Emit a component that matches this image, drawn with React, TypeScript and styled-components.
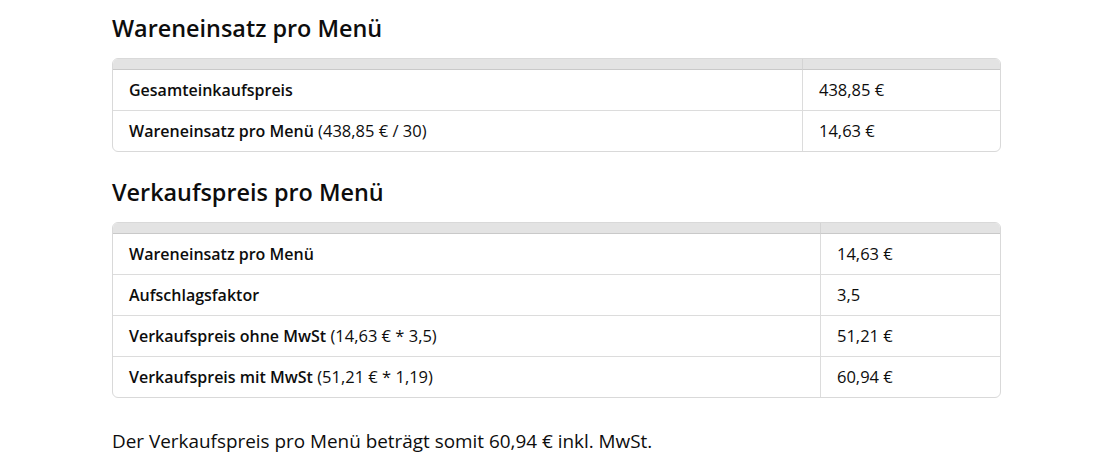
import React from "react";
import styled, { createGlobalStyle } from "styled-components";

const Global = createGlobalStyle`
  html, body { margin: 0; padding: 0; background: #ffffff; }
  body {
    font-family: "Open Sans", "Noto Sans", sans-serif;
    color: #0d0d0d;
    -webkit-font-smoothing: antialiased;
  }
`;

const Page = styled.main`
  width: 889px;
  margin: 0 auto;
  padding-top: 12px;
`;

const Heading = styled.h2<{ $first?: boolean }>`
  margin: ${(p) => (p.$first ? "0" : "24px")} 0 14px;
  font-size: 23.4px;
  line-height: 32px;
  font-weight: 600;
  color: #0d0d0d;
`;

const TableFrame = styled.div`
  border: 1px solid #d9d9d9;
  border-radius: 6px;
  overflow: hidden;
`;

const Table = styled.table`
  width: 100%;
  border-collapse: separate;
  border-spacing: 0;
  table-layout: fixed;
  font-size: 16.5px;
  line-height: 24px;
`;

const HeadCell = styled.th`
  height: 10px;
  padding: 0;
  background: #e3e3e3;
  border-bottom: 1px solid #c9c9c9;
  & + & { border-left: 1px solid #d4d4d4; }
`;

const Row = styled.tr`
  &:not(:last-child) td { border-bottom: 1px solid #dcdcdc; }
`;

const Cell = styled.td`
  padding: 8px 16px;
  vertical-align: top;
  font-weight: 400;
  & + & { border-left: 1px solid #dcdcdc; }
`;

const Label = styled.strong`
  font-weight: 600;
  font-size: 16px;
`;

const Text = styled.p`
  margin: 29px 0 0;
  font-size: 18.9px;
  line-height: 28px;
`;

type Item = { label: string; note?: string; value: string };

const PriceTable: React.FC<{ items: Item[]; firstWidth: number }> = ({ items, firstWidth }) => (
  <TableFrame>
    <Table>
      <colgroup>
        <col style={{ width: firstWidth }} />
        <col />
      </colgroup>
      <thead>
        <tr>
          <HeadCell />
          <HeadCell />
        </tr>
      </thead>
      <tbody>
        {items.map((it) => (
          <Row key={it.label}>
            <Cell>
              <Label>{it.label}</Label>
              {it.note ? ` ${it.note}` : null}
            </Cell>
            <Cell>{it.value}</Cell>
          </Row>
        ))}
      </tbody>
    </Table>
  </TableFrame>
);

export default function App() {
  return (
    <>
      <Global />
      <Page>
        <Heading $first>Wareneinsatz pro Menü</Heading>
        <PriceTable
          firstWidth={689}
          items={[
            { label: "Gesamteinkaufspreis", value: "438,85 €" },
            { label: "Wareneinsatz pro Menü", note: "(438,85 € / 30)", value: "14,63 €" },
          ]}
        />
        <Heading>Verkaufspreis pro Menü</Heading>
        <PriceTable
          firstWidth={707}
          items={[
            { label: "Wareneinsatz pro Menü", value: "14,63 €" },
            { label: "Aufschlagsfaktor", value: "3,5" },
            { label: "Verkaufspreis ohne MwSt", note: "(14,63 € * 3,5)", value: "51,21 €" },
            { label: "Verkaufspreis mit MwSt", note: "(51,21 € * 1,19)", value: "60,94 €" },
          ]}
        />
        <Text>Der Verkaufspreis pro Menü beträgt somit 60,94 € inkl. MwSt.</Text>
      </Page>
    </>
  );
}
